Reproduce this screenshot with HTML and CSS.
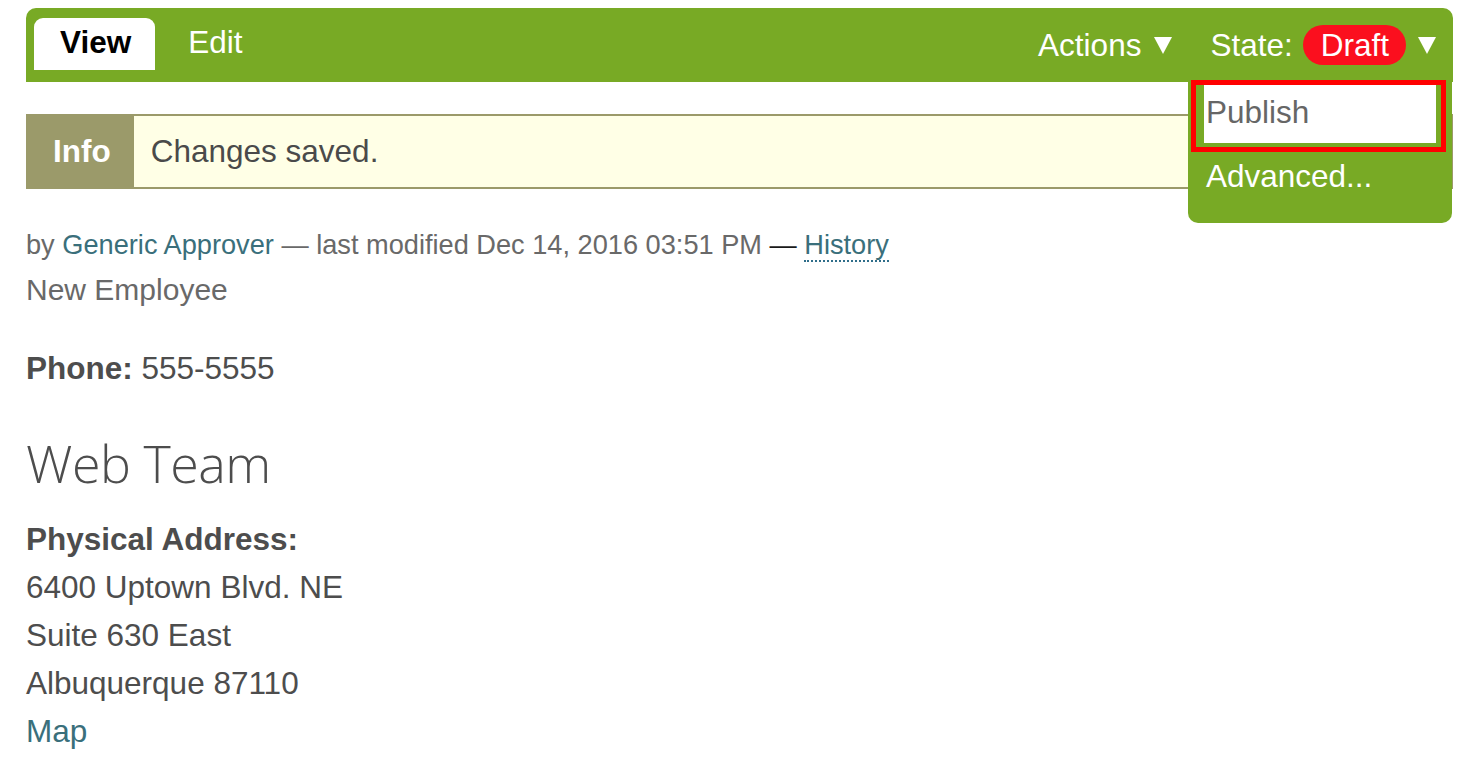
FILE: index.html
```html
<!DOCTYPE html>
<html lang="en">
<head>
<meta charset="utf-8">
<title>New Employee</title>
<link rel="stylesheet" href="styles.css">
</head>
<body>
<div class="page">
  <div class="toolbar">
    <ul class="tabs">
      <li class="tab active">View</li>
      <li class="tab">Edit</li>
    </ul>
    <div class="menus">
      <div class="menu actions"><span>Actions</span><svg class="caret" width="18" height="17" viewBox="0 0 18 17"><polygon points="0,0 18,0 9,17" fill="#fff"/></svg></div>
      <div class="menu state"><span>State:</span><span class="pill">Draft</span><svg class="caret" width="18" height="17" viewBox="0 0 18 17"><polygon points="0,0 18,0 9,17" fill="#fff"/></svg></div>
    </div>
    <div class="dropdown">
      <a class="item focused"><span class="item-inner">Publish</span></a>
      <a class="item">Advanced...</a>
    </div>
  </div>

  <div class="message">
    <div class="message-label">Info</div>
    <div class="message-text">Changes saved.</div>
  </div>

  <p class="byline">by <a class="link">Generic Approver</a> — last modified Dec 14, 2016 03:51 PM <span class="dash">—</span> <a class="link history">History</a></p>
  <p class="description">New Employee</p>

  <p class="phone"><strong>Phone:</strong> 555-5555</p>

  <h2 class="team">Web Team</h2>
  <div class="address">
    <div class="addr-label">Physical Address:</div>
    <div>6400 Uptown Blvd. NE</div>
    <div>Suite 630 East</div>
    <div>Albuquerque 87110</div>
    <div><a class="link">Map</a></div>
  </div>
</div>
</body>
</html>
```

FILE: styles.css
```css
html, body {
  margin: 0;
  padding: 0;
  background: #fff;
}

body {
  font-family: "Liberation Sans", Arial, Helvetica, sans-serif;
  font-size: 31.5px;
  line-height: 48px;
  color: #4d4d4d;
}

.page {
  padding: 8px 11px 0 26px;
}

/* toolbar */
.toolbar {
  position: relative;
  display: flex;
  justify-content: space-between;
  align-items: stretch;
  background: #78aa25;
  border-radius: 10px 10px 0 0;
  height: 74px;
  color: #fff;
}

.tabs {
  list-style: none;
  margin: 0;
  padding: 10px 0 0 8px;
  display: flex;
  gap: 8px;
  align-items: flex-start;
}

.tab {
  padding: 0 25px 4px 25px;
  line-height: 48px;
  color: #fff;
}

.tab.active {
  background: #fff;
  color: #000;
  font-weight: bold;
  border-radius: 9px 9px 0 0;
  padding-left: 26px;
  padding-right: 24px;
}

.menus {
  display: flex;
  align-items: center;
  gap: 38px;
  padding-right: 17px;
}

.menu {
  display: flex;
  align-items: center;
  line-height: 48px;
}

.menu.actions {
  gap: 13px;
}

.menu.state {
  gap: 10px;
}

.menu.state .caret {
  margin-left: 2px;
}

.caret {
  display: block;
  margin-top: 1px;
}

.pill {
  display: inline-block;
  background: #fb0f1e;
  color: #fff;
  border-radius: 20px;
  height: 40px;
  line-height: 40px;
  padding: 0 17px 0 18px;
}

.dropdown {
  position: absolute;
  top: 100%;
  right: 1px;
  width: 264px;
  background: #78aa25;
  border-radius: 0 0 10px 10px;
  padding: 3px 0 23px 0;
  box-sizing: border-box;
  z-index: 2;
}

.item {
  display: block;
  color: #fff;
  line-height: 48px;
  padding-left: 18px;
  text-decoration: none;
}

.item.focused {
  outline: 5px solid #ff0000;
  margin: 0 11px 0 8px;
  padding: 0 5px 4px 8px;
}

.item-inner {
  display: block;
  background: #fff;
  color: #666;
  line-height: 54px;
  height: 58px;
  padding-left: 2px;
}

.dropdown .item + .item {
  margin-top: 5px;
}

/* status message */
.message {
  display: flex;
  margin-top: 32px;
  border: 2px solid #9b9a6a;
  background: #ffffe6;
}

.message-label {
  background: #9b9a6a;
  color: #fff;
  font-weight: bold;
  padding: 12px 23px 12px 25px;
  line-height: 47px;
}

.message-text {
  padding: 12px 17px;
  line-height: 47px;
  color: #4a4a4a;
}

/* content */
.link {
  color: #3a6f7b;
  text-decoration: none;
}

.byline {
  margin: 34px 0 0 0;
  font-size: 27.2px;
  line-height: 44px;
  color: #696969;
}

.dash {
  color: #1a1a1a;
}

.history {
  border-bottom: 2px dotted #2f6e8a;
}

.description {
  margin: 0;
  font-size: 30px;
  line-height: 45px;
  color: #696969;
}

.phone {
  margin: 32px 0 0 0;
}

.phone strong {
  font-weight: bold;
}

.team {
  margin: 39px 0 0 0;
  font-family: "Open Sans", "Liberation Sans", sans-serif;
  font-weight: 300;
  font-size: 52px;
  line-height: 64px;
  letter-spacing: -0.5px;
  color: #4d4d4d;
}

.address {
  margin-top: 20px;
}

.addr-label {
  font-weight: bold;
}
```
